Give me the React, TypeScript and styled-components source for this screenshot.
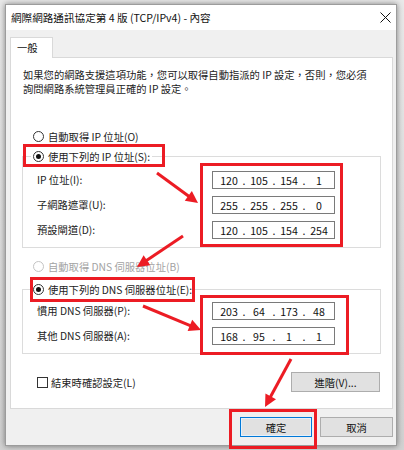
import { Fragment } from 'react';
import styled, { createGlobalStyle } from 'styled-components';

const GlobalStyle = createGlobalStyle`
  html, body {
    margin: 0;
    padding: 0;
  }

  body {
    background: #dedede;
    font-family: 'Noto Sans CJK TC', 'Noto Sans', sans-serif;
    font-size: 10.3px;
    color: #222;
  }
`;

const RED = '#ec1c24';

const Page = styled.div`
  position: relative;
  width: 404px;
  height: 450px;
  box-sizing: border-box;
  padding: 4px 0 0 5px;
  background: linear-gradient(#e9e9e9, #d2d2d2);
  overflow: hidden;
`;

const Window = styled.div`
  width: 392px;
  height: 442px;
  box-sizing: border-box;
  border: 1px solid #9c9c9c;
  background: #f0f0f0;
  box-shadow: 0 0 6px rgba(0, 0, 0, 0.45);
  display: flex;
  flex-flow: column;
`;

const TitleBar = styled.div`
  height: 25px;
  background: #fff;
  display: flex;
  align-items: center;
  justify-content: space-between;
  padding: 0 5px 0 5px;
  color: #111;
  font-size: 10.6px;
`;

const Body = styled.div`
  padding: 7px 3px 0 4px;
  display: flex;
  flex-flow: column;
`;

const Tab = styled.div`
  position: relative;
  z-index: 1;
  width: 43px;
  height: 21px;
  box-sizing: border-box;
  margin-bottom: -1px;
  padding: 2px 0 0 6px;
  background: #fff;
  border: 1px solid #d9d9d9;
  border-bottom: none;
  color: #111;
`;

const Panel = styled.div`
  height: 352px;
  box-sizing: border-box;
  border: 1px solid #d9d9d9;
  background: #fff;
  padding: 10px 11px 0 11px;
  display: flex;
  flex-flow: column;
`;

const Description = styled.p`
  margin: 0;
  padding-left: 1px;
  line-height: 14px;
  white-space: nowrap;
`;

const RadioRow = styled.label<{ $disabled?: boolean; $gap?: number }>`
  display: flex;
  align-items: center;
  gap: 4px;
  height: 16px;
  margin-top: ${(p) => p.$gap ?? 0}px;
  padding-left: 11px;
  color: ${(p) => (p.$disabled ? '#a3a3a3' : 'inherit')};
  white-space: nowrap;
`;

const RadioDot = styled.span<{ $checked?: boolean; $disabled?: boolean }>`
  width: 11px;
  height: 11px;
  box-sizing: border-box;
  border-radius: 50%;
  border: 1px solid ${(p) => (p.$disabled ? '#c4c4c4' : '#333')};
  display: flex;
  align-items: center;
  justify-content: center;

  &::after {
    content: '';
    display: ${(p) => (p.$checked ? 'block' : 'none')};
    width: 5px;
    height: 5px;
    border-radius: 50%;
    background: #111;
  }
`;

const Group = styled.fieldset<{ $top: number; $bottom: number; $gap: number }>`
  margin: ${(p) => p.$gap}px 0 0 0;
  border: 1px solid #dcdcdc;
  padding: ${(p) => p.$top}px 45px ${(p) => p.$bottom}px 14px;
  min-width: 0;
`;

const GroupLegend = styled.legend`
  padding: 0 2px;
  margin-left: -6px;
  display: flex;
  align-items: center;
  gap: 4px;
  height: 16px;
  white-space: nowrap;
`;

const FieldGrid = styled.div`
  display: grid;
  grid-template-columns: 1fr 123px;
  row-gap: 7px;
`;

const FieldLabel = styled.span`
  line-height: 18px;
  white-space: nowrap;
`;

const IpBox = styled.div`
  height: 18px;
  box-sizing: border-box;
  border: 1px solid #7a7a7a;
  background: #fff;
  display: flex;
  align-items: center;
  padding-left: 3px;
  font-size: 10.6px;
  color: #111;
`;

const Octet = styled.span`
  width: 26px;
  text-align: center;
`;

const Dot = styled.span`
  width: 4px;
  text-align: center;
`;

const BottomRow = styled.div`
  margin-top: 18px;
  height: 20px;
  display: flex;
  align-items: center;
  justify-content: space-between;
  padding: 0 1px 0 15px;
`;

const CheckRow = styled.label`
  display: flex;
  align-items: center;
  gap: 3px;
`;

const CheckBox = styled.span`
  width: 11px;
  height: 11px;
  box-sizing: border-box;
  border: 1px solid #333;
  background: #fff;
`;

const Button = styled.button<{ $width: number; $primary?: boolean }>`
  width: ${(p) => p.$width}px;
  height: 20px;
  padding: 0;
  font: inherit;
  color: #111;
  background: #e1e1e1;
  border: 1px solid ${(p) => (p.$primary ? '#0078d7' : '#adadad')};
  box-shadow: ${(p) => (p.$primary ? 'inset 0 0 0 1px #e5f1fb' : 'none')};
`;

const Footer = styled.div`
  margin-top: 8px;
  display: flex;
  justify-content: flex-end;
  gap: 8px;
`;

const Annotations = styled.svg`
  position: absolute;
  left: 0;
  top: 0;
  pointer-events: none;
`;

function Radio({ label, checked, disabled, gap }: { label: string; checked?: boolean; disabled?: boolean; gap?: number }) {
  return (
    <RadioRow $disabled={disabled} $gap={gap}>
      <RadioDot $checked={checked} $disabled={disabled} />
      {label}
    </RadioRow>
  );
}

function IpField({ value }: { value: string[] }) {
  return (
    <IpBox>
      <Octet>{value[0]}</Octet>
      <Dot>.</Dot>
      <Octet>{value[1]}</Octet>
      <Dot>.</Dot>
      <Octet>{value[2]}</Octet>
      <Dot>.</Dot>
      <Octet>{value[3]}</Octet>
    </IpBox>
  );
}

// red annotation arrow: shaft + filled head
function Arrow({ x1, y1, x2, y2 }: { x1: number; y1: number; x2: number; y2: number }) {
  const len = Math.hypot(x2 - x1, y2 - y1);
  const ux = (x2 - x1) / len;
  const uy = (y2 - y1) / len;
  const head = 12;
  const half = 6;
  const bx = x2 - ux * head;
  const by = y2 - uy * head;
  const points = `${x2},${y2} ${bx - uy * half},${by + ux * half} ${bx + uy * half},${by - ux * half}`;
  return (
    <g fill={RED} stroke={RED}>
      <line x1={x1} y1={y1} x2={bx + ux} y2={by + uy} strokeWidth={3} />
      <polygon points={points} strokeWidth={0} />
    </g>
  );
}

const ipRows = [
  { label: 'IP 位址(I):', value: ['120', '105', '154', '1'] },
  { label: '子網路遮罩(U):', value: ['255', '255', '255', '0'] },
  { label: '預設閘道(D):', value: ['120', '105', '154', '254'] },
];

const dnsRows = [
  { label: '慣用 DNS 伺服器(P):', value: ['203', '64', '173', '48'] },
  { label: '其他 DNS 伺服器(A):', value: ['168', '95', '1', '1'] },
];

function Fields({ rows }: { rows: { label: string; value: string[] }[] }) {
  return (
    <FieldGrid>
      {rows.map((row) => (
        <Fragment key={row.label}>
          <FieldLabel>{row.label}</FieldLabel>
          <IpField value={row.value} />
        </Fragment>
      ))}
    </FieldGrid>
  );
}

export default function App() {
  return (
    <Page>
      <GlobalStyle />
      <Window>
        <TitleBar>
          網際網路通訊協定第 4 版 (TCP/IPv4) - 內容
          <svg width="11" height="11" viewBox="0 0 11 11">
            <path d="M0.5 0.5 L10.5 10.5 M10.5 0.5 L0.5 10.5" stroke="#111" strokeWidth="1" />
          </svg>
        </TitleBar>
        <Body>
          <Tab>一般</Tab>
          <Panel>
            <Description>
              如果您的網路支援這項功能，您可以取得自動指派的 IP 設定，否則，您必須
              <br />
              詢問網路系統管理員正確的 IP 設定。
            </Description>

            <Radio label="自動取得 IP 位址(O)" gap={32} />

            <Group $gap={4} $top={7} $bottom={8}>
              <GroupLegend>
                <RadioDot $checked />
                使用下列的 IP 位址(S):
              </GroupLegend>
              <Fields rows={ipRows} />
            </Group>

            <Radio label="自動取得 DNS 伺服器位址(B)" disabled gap={10} />

            <Group $gap={7} $top={5} $bottom={8}>
              <GroupLegend>
                <RadioDot $checked />
                使用下列的 DNS 伺服器位址(E):
              </GroupLegend>
              <Fields rows={dnsRows} />
            </Group>

            <BottomRow>
              <CheckRow>
                <CheckBox />
                結束時確認設定(L)
              </CheckRow>
              <Button $width={89}>進階(V)...</Button>
            </BottomRow>
          </Panel>
          <Footer>
            <Button $width={72} $primary>
              確定
            </Button>
            <Button $width={73}>取消</Button>
          </Footer>
        </Body>
      </Window>

      <Annotations width="404" height="450" viewBox="0 0 404 450">
        <g fill="none" stroke={RED} strokeWidth={3}>
          <rect x={24.5} y={145.5} width={139} height={20} />
          <rect x={201.5} y={164.5} width={140} height={81} />
          <rect x={31.5} y={278.5} width={162} height={22} />
          <rect x={201.5} y={296.5} width={146} height={57} />
          <rect x={230.5} y={410.5} width={85} height={37} />
        </g>
        <Arrow x1={157} y1={173} x2={198} y2={203} />
        <Arrow x1={183} y1={236} x2={137} y2={267} />
        <Arrow x1={143} y1={306} x2={201} y2={330} />
        <Arrow x1={291} y1={359} x2={265} y2={407} />
      </Annotations>
    </Page>
  );
}
